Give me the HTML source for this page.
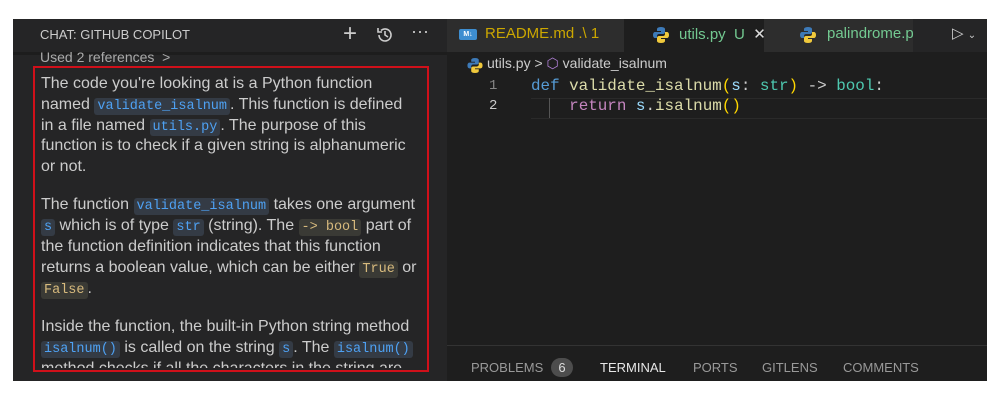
<!DOCTYPE html>
<html><head><style>
body{margin:0;width:1000px;height:400px;background:#fff;position:relative;overflow:hidden;font-family:"Liberation Sans",sans-serif}
.abs{position:absolute}
#chat{left:13px;top:19px;width:434px;height:362px;background:#252526}
#ed{left:447px;top:19px;width:540px;height:362px;background:#1e1e1e}
.code{font-family:"Liberation Mono",monospace}
.c{font-family:"Liberation Mono",monospace;font-size:13.5px;line-height:14px;color:#4ea1f3;background:#343b45;border-radius:3px;padding:1px 3px}
.y{color:#d7ba7d;background:#3a3a35}
#txt{left:41px;top:74px;width:378px;height:294px;overflow:hidden;color:#ccc;font-size:16px;line-height:20.8px}
#txt p{margin:0 0 17.5px 0}
.bt{position:absolute;top:341px;font-size:13px;color:#999;white-space:nowrap}
</style></head><body>
<svg width="0" height="0" style="position:absolute"><defs><g id="py"><path d="M8 1C4 1 4 3 4 3v2h4v1H2S0 6 0 9s2 3 2 3h2v-2s0-2 2-2h4s2 0 2-2V3s0-2-4-2z" fill="#3d7ab8"/><path d="M8 17c4 0 4-2 4-2v-2H8v-1h6s2 0 2-3-2-3-2-3h-2v2s0 2-2 2H6s-2 0-2 2v3s0 2 4 2z" fill="#f0c93c"/></g></defs></svg>
<div id="chat" class="abs">
 <div class="abs" style="left:27px;top:8px;font-size:13px;color:#ccc;">CHAT: GITHUB COPILOT</div>
 <div class="abs" style="left:330px;top:1px;font-size:24px;color:#ccc;">+</div>
 <svg class="abs" style="left:362px;top:6px" width="20" height="20" viewBox="0 0 20 20" fill="none" stroke="#ccc" stroke-width="1.6"><path d="M4 10a6 6 0 1 0 2-4.5"/><path d="M3 3v4h4"/><path d="M10 6v4l3 2"/></svg>
 <div class="abs" style="left:398px;top:2px;font-size:18px;color:#ccc;">···</div>
 <div class="abs" style="left:0;top:33px;width:434px;height:3px;background:#1d1d1d"></div>
 <div class="abs" style="left:27px;top:30px;font-size:14px;color:#aaa;">Used 2 references &nbsp;&gt;</div>
 <div class="abs" style="left:20px;top:47px;width:392px;height:302px;border:2px solid #d0101a"></div>
</div>
<div id="txt" class="abs">
<p>The code you're looking at is a Python function named <span class="c">validate_isalnum</span>. This function is defined in a file named <span class="c">utils.py</span>. The purpose of this function is to check if a given string is alphanumeric or not.</p>
<p>The function <span class="c">validate_isalnum</span> takes one argument <span class="c">s</span> which is of type <span class="c">str</span> (string). The <span class="c y">-&gt; bool</span> part of the function definition indicates that this function returns a boolean value, which can be either <span class="c y">True</span> or <span class="c y">False</span>.</p>
<p style="margin:0">Inside the function, the built-in Python string method <span class="c">isalnum()</span> is called on the string <span class="c">s</span>. The <span class="c">isalnum()</span> method checks if all the characters in the string are</p>
</div>
<div id="ed" class="abs">
 <div class="abs" style="left:0;top:0;width:540px;height:33px;background:#252526"></div>
 <div class="abs" style="left:0;top:0;width:177px;height:33px;background:#2d2d2d"></div>
 <div class="abs" style="left:12px;top:10px;width:18px;height:11px;background:#3e8ed0;border-radius:2px;font-size:7px;color:#fff;text-align:center;line-height:11px;font-weight:bold">M↓</div>
 <div class="abs" style="left:38px;top:6px;font-size:15px;color:#cca700">README.md .\ 1</div>
 <div class="abs" style="left:177px;top:0;width:140px;height:33px;background:#1e1e1e"></div>
 <svg class="abs" style="left:205px;top:7px" width="18" height="18" viewBox="0 0 16 18"><use href="#py"/></svg>
 <div class="abs" style="left:232px;top:6px;font-size:15px;color:#73c991;white-space:nowrap">utils.py &nbsp;U &nbsp;<span style="color:#ddd">✕</span></div>
 <div class="abs" style="left:317px;top:0;width:149px;height:33px;background:#2d2d2d"></div>
 <svg class="abs" style="left:352px;top:7px" width="18" height="18" viewBox="0 0 16 18"><use href="#py"/></svg>
 <div class="abs" style="left:380px;top:6px;font-size:15px;color:#73c991;width:86px;overflow:hidden;white-space:nowrap">palindrome.py U</div>
 <div class="abs" style="left:505px;top:5px;font-size:15px;color:#ccc">▷ <span style="font-size:10px">⌄</span></div>
 <svg class="abs" style="left:20px;top:38px" width="16" height="17" viewBox="0 0 16 18"><use href="#py"/></svg>
 <div class="abs" style="left:40px;top:36px;font-size:14px;color:#ccc">utils.py &gt; <span style="color:#b180d7">⬡</span> validate_isalnum</div>
 <div class="abs code" style="left:42px;top:57px;font-size:14px;line-height:20px;color:#858585">1<br><span style="color:#ccc">2</span></div>
 <div class="abs" style="left:84px;top:79px;width:456px;height:19px;border-top:1px solid #2a2a2a;border-bottom:1px solid #2a2a2a"></div>
 <div class="abs" style="left:102px;top:79px;width:1px;height:20px;background:#555"></div>
 <div class="abs code" style="left:84px;top:57px;font-size:15.9px;line-height:20px;color:#dcdcaa;white-space:pre"><span style="color:#569cd6">def</span> validate_isalnum<span style="color:#ffd700">(</span><span style="color:#9cdcfe">s</span><span style="color:#ccc">: </span><span style="color:#4ec9b0">str</span><span style="color:#ffd700">)</span><span style="color:#ccc"> -&gt; </span><span style="color:#4ec9b0">bool</span><span style="color:#ccc">:</span>
    <span style="color:#c586c0">return</span> <span style="color:#9cdcfe">s</span><span style="color:#ccc">.</span>isalnum<span style="color:#ffd700">()</span></div>
 <div class="abs" style="left:0;top:326px;width:540px;height:1px;background:#333"></div>
 <div class="bt" style="left:24px">PROBLEMS</div>
 <div class="bt" style="left:104px;top:339px;background:#4d4d4d;color:#ddd;border-radius:10px;width:22px;height:19px;line-height:19px;text-align:center">6</div>
 <div class="bt" style="left:153px;color:#e7e7e7">TERMINAL</div>
 <div class="bt" style="left:246px">PORTS</div>
 <div class="bt" style="left:315px">GITLENS</div>
 <div class="bt" style="left:396px">COMMENTS</div>
</div>
</body></html>
